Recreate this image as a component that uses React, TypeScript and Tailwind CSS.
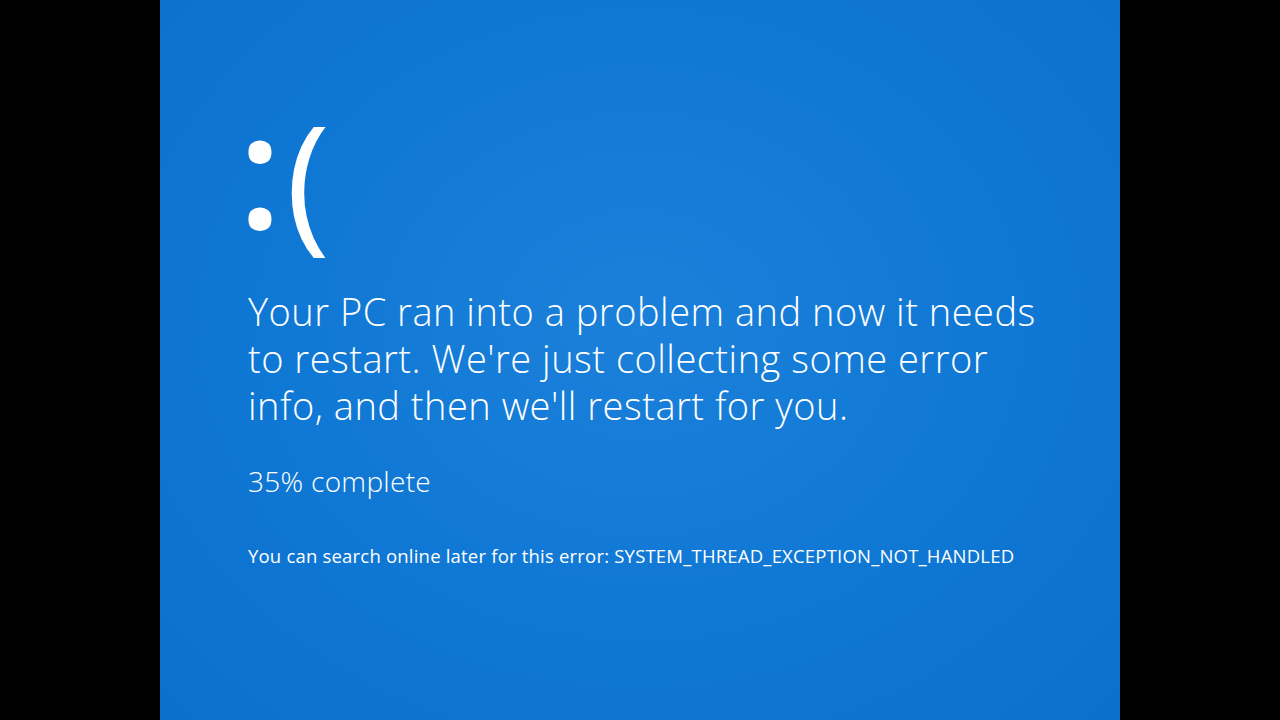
import React from 'react';

const font = { fontFamily: '"Open Sans", "Noto Sans", sans-serif' };

export default function App() {
  return (
    <div className="flex h-[720px] w-full justify-center bg-black" style={font}>
      <div className="flex h-full w-[960px] flex-col bg-[radial-gradient(ellipse_at_50%_45%,#1b80da_0%,#0f78d4_55%,#0a70cc_100%)] pl-[88px] pt-[82px] text-white">
        <div className="flex items-baseline leading-[180px]">
          <span className="-ml-[10px] -translate-y-[5px] text-[160px] font-semibold">:</span>
          <span className="ml-[4px] text-[150px] font-normal">(</span>
        </div>
        <p className="mt-[22px] w-[800px] text-[38px] font-light leading-[47px] tracking-[0.5px]">
          Your PC ran into a problem and now it needs to restart. We're just collecting some error info, and then we'll restart for you.
        </p>
        <p className="mt-[33px] text-[28px] font-light leading-[38px] tracking-[0.3px]">35% complete</p>
        <p className="mt-[43px] text-[18.5px] leading-[26px] tracking-[0.2px]">
          You can search online later for this error: SYSTEM_THREAD_EXCEPTION_NOT_HANDLED
        </p>
      </div>
    </div>
  );
}
